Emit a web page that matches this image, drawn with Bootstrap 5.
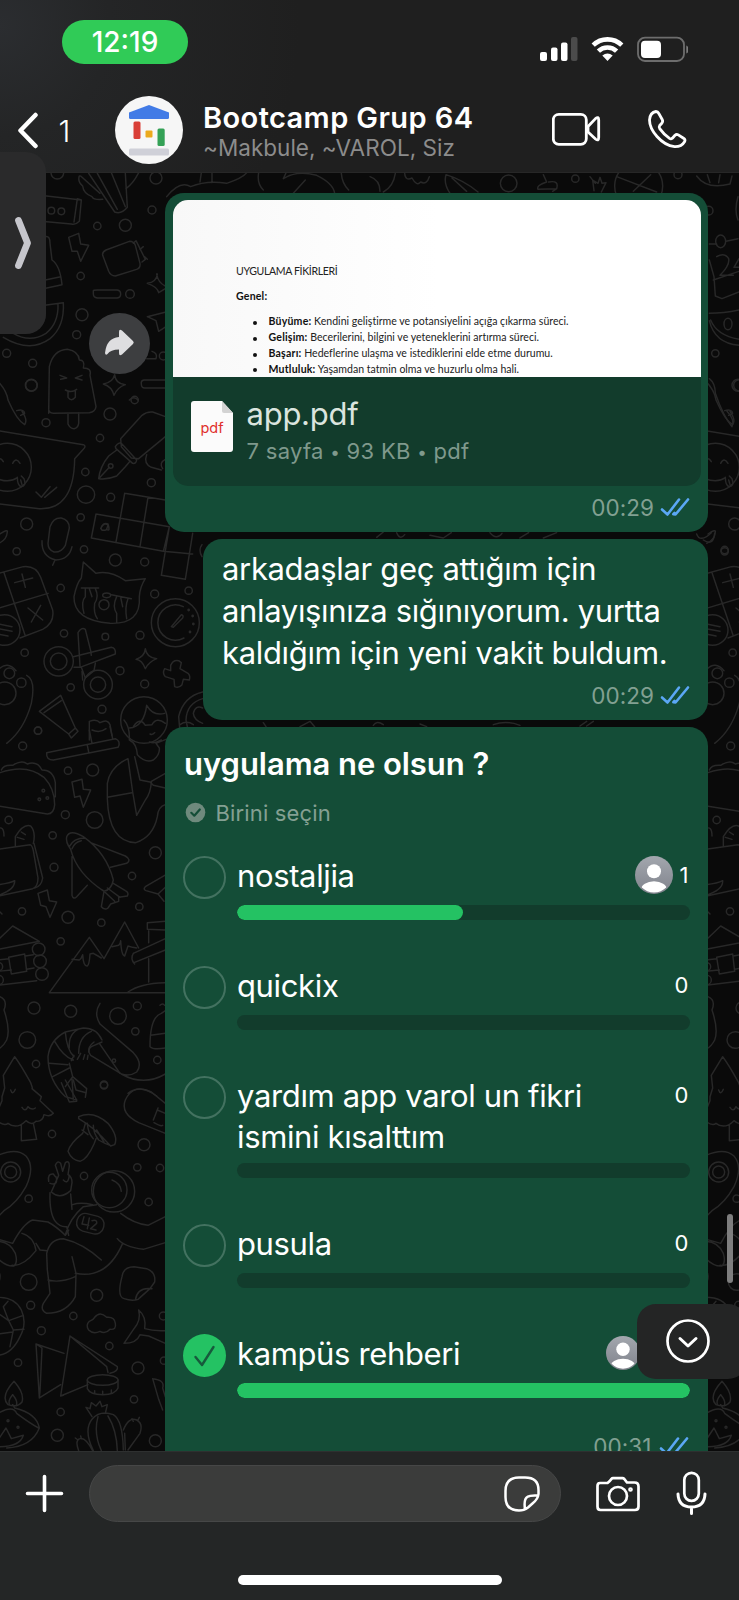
<!DOCTYPE html>
<html lang="tr" data-bs-theme="dark">
<head>
<meta charset="utf-8">
<meta name="viewport" content="width=device-width, initial-scale=1">
<title>Bootcamp Grup 64</title>
<link href="https://cdn.jsdelivr.net/npm/bootstrap@5.3.0/dist/css/bootstrap.min.css" rel="stylesheet">
<style>
  body{width:739px;height:1600px;margin:0;overflow:hidden;background:#0a0a0a;color:#fff;font-family:Inter,"Liberation Sans",sans-serif}
  svg{display:block;flex:none}
  .ln{fill:none;stroke:currentColor;stroke-linecap:round;stroke-linejoin:round}
  .phone{height:1600px}
  /* header */
  .top-bar{height:173px;background:radial-gradient(circle at 0 15%,#2b2d30 0,#242526 110px,#1f1f1f 300px);border-bottom:1px solid #272727}
  .status{height:86px;padding:20px 51px 0 62px}
  .clock{width:126px;height:44px;border-radius:22px;background:#30cb57;font-size:28px;font-weight:500;line-height:44px;letter-spacing:0}
  .chat-head{height:89px;padding-left:18px}
  .unread{font-size:30px;font-weight:300;line-height:36px;width:40px;margin-left:19.5px}
  .group-pic{width:68px;height:68px;margin-left:16.5px;margin-top:-1px}
  .who{margin-left:20px;width:349px}
  .who-name{font-size:29px;font-weight:600;line-height:34px;letter-spacing:.4px}
  .who-list{font-size:22.5px;line-height:26px;color:#8c8c8c;letter-spacing:.02px}
  /* conversation */
  .chat{height:1278px;overflow:hidden;padding:20px 31px 0 0;background:#0a0a0a}
  .wall{left:0;top:0;color:#282828}
  .wall .ln{stroke-width:4.4}
  .bubble{background:#144d37;border-radius:19px;position:relative;flex:none}
  .b-doc{width:543px;height:339px;padding:7px 7px 0 7.5px}
  .b-text{width:505px;height:181px;margin-top:7px;padding:9px 18px 0 19px}
  .b-poll{width:543px;height:760px;margin-top:7px;padding:17px 18.5px 0 18px}
  .doc{height:286px;border-radius:15px;background:#123c2c}
  .sheet{height:177px;background:linear-gradient(90deg,#f8f8f8,#fff 50%);color:#222;font:10.55px/15.8px Lato,sans-serif;padding:63.500px 0 0 63.5px;overflow:hidden;white-space:nowrap}
  .sheet p{margin:0 0 9.7px}
  .sheet ul{margin:1.3px 0 0;padding-left:32.5px;letter-spacing:.01px;list-style:none}
  .sheet li{height:15.8px;position:relative}
  .sheet li::before{content:"";position:absolute;left:-16px;top:6.5px;width:4px;height:4px;border-radius:50%;background:#111}
  .sheet b{color:#111;letter-spacing:.2px}
  .doc-name{font-size:31px;line-height:38px;letter-spacing:-.25px;color:#dbe5df}
  .doc-meta{font-size:22px;line-height:30px;letter-spacing:.3px;color:#7f998c;margin-top:3px}
  .doc-meta i{font-style:normal;font-size:17px;vertical-align:1.5px;line-height:1}
  .stamp{font-size:22.5px;line-height:24px;letter-spacing:.05px;color:#82a092}
  .msg{font-size:31px;line-height:42px;letter-spacing:-.34px;white-space:nowrap}
  .q{font-size:31px;font-weight:600;line-height:40px;letter-spacing:-.05px;padding-left:1px}
  .hint{font-size:22px;line-height:24px;margin-top:16.5px;letter-spacing:.15px;color:#84a093}
  .opt{display:grid;grid-template-columns:43px 1fr;column-gap:11px;height:110px}
  .opt.tall{height:148.5px}
  .opt-name{font-size:31px;line-height:41.7px;letter-spacing:-.36px;white-space:nowrap}
  .tall .opt-name{margin-bottom:-3.5px}
  .count{font-size:22px;line-height:40px;gap:7px;padding-right:1px}
  .track{height:15px;border-radius:8px;background:#123c2c;margin-top:8.6px;overflow:hidden}
  .fill{height:15px;border-radius:8px;background:#24c263}
  .ring{width:43px;height:43px;border-radius:50%;border:2.6px solid #437260;margin-top:1px}
  .ring.on{background:#24c263;border:0}
  /* floating controls */
  .side-tab{left:-20px;top:152px;width:65.5px;height:182px;border-radius:20px;background:#2a2a2b;padding-left:34px;z-index:3}
  .share{left:89px;top:313px;z-index:2}
  .thumb{left:727px;top:1213.5px;width:6.3px;height:69px;border-radius:4px;background:#7e7e7e}
  .to-end{left:637px;top:1303.5px;width:110px;height:75.5px;border-radius:19px;background:#242525;padding-left:29px}
  /* composer */
  .composer{height:149px;background:#242626;border-top:1px solid #2e3030;padding:13px 0 0 25px}
  .field{width:472px;height:57px;border-radius:29px;background:#3b3c3b;border:1px solid #464747;margin-left:25px;padding-right:20px}
  .home-bar{width:264px;height:10px;border-radius:5px;background:#fff;margin:52.5px 0 0 212.5px}
</style>
</head>
<body>
<div class="phone position-relative d-flex flex-column">

<header class="top-bar">
  <div class="status d-flex justify-content-between">
    <div class="clock text-center">12:19</div>
    <svg width="150" height="30" viewBox="538 34 150 30" style="margin-top:14px">
      <rect x="540" y="52" width="7" height="9" rx="2" fill="#fff"/><rect x="551" y="47.5" width="6.5" height="13.5" rx="2" fill="#fff"/><rect x="561" y="42.5" width="6.5" height="18.500" rx="2" fill="#fff"/><rect x="571" y="37" width="6.500" height="24" rx="2" fill="#4b4b4b"/>
      <g fill="none" stroke="#fff" stroke-width="4.600"><path d="M593.200 45.200A20.500 20.500 0 0 1 621.800 45.200"/><path d="M598.400 51.200A13 13 0 0 1 616.600 51.200"/></g>
      <path d="M602.300 55.600Q607.500 51.500 612.700 55.600L607.500 61Z" fill="#fff"/>
      <rect x="638" y="37.700" width="46" height="23.300" rx="7" fill="none" stroke="#6d6d6d" stroke-width="1.800"/>
      <rect x="641" y="40.700" width="20" height="17.200" rx="4" fill="#fff"/><path d="M686.300 45.500q2.600 1.200 2.600 4t-2.600 4z" fill="#7c7c7c"/>
    </svg>
  </div>
  <div class="chat-head d-flex align-items-center">
    <svg width="21" height="37" viewBox="0 0 21 37" class="ln text-white" stroke-width="4.500"><path d="M17.500 3L2.500 18.500L17.500 34"/></svg>
    <div class="unread">1</div>
    <svg class="group-pic" viewBox="115 96 68 68">
      <circle cx="149" cy="130" r="34" fill="#f6f6f6"/>
      <path d="M129 112.500L149 105L169 112.500V117.500Q169 119 167.500 119H130.500Q129 119 129 117.500Z" fill="#427be6"/>
      <rect x="133.500" y="121.500" width="7" height="17.500" rx="1.500" fill="#d93f37"/><rect x="145.500" y="130.500" width="7" height="7" rx="1" fill="#eba91d"/><rect x="157.500" y="128.500" width="7.200" height="17.500" rx="1.500" fill="#34a156"/><rect x="129" y="148.500" width="40" height="7" rx="1.500" fill="#cfd0d8"/>
    </svg>
    <div class="who"><div class="who-name">Bootcamp Grup 64</div><div class="who-list">~Makbule, ~VAROL, Siz</div></div>
    <svg width="136" height="44" viewBox="552 108 136 44" class="ln text-white" stroke-width="2.800" style="margin-top:-2px">
      <rect x="553.300" y="114.300" width="33" height="30" rx="5.500"/><path d="M588 126.500L595.500 118.600Q598.700 116 598.700 120V137.500Q598.700 141.500 595.500 139L588 132Z"/>
      <path d="M649.500 120Q650 112.500 656 111.500Q657.800 111.500 658.800 113.500L662.200 119.500Q663.300 121.500 661.800 123.200L659.700 125.500Q658.700 127 659.700 128.600Q664 134.600 669.500 138.400Q671 139.300 672.400 138.200L675 135.300Q676.500 133.900 678.300 134.900L683.500 138.200Q685.600 139.600 684.700 141.500Q681.500 147 674.500 146.700Q665 145.500 657 136.500Q649.500 128 649.500 120Z"/>
    </svg>
  </div>
</header>

<main class="chat position-relative d-flex flex-column align-items-end">
  <svg class="wall position-absolute" width="739" height="1278" viewBox="0 173 739 1278">
    <defs><g id="tile">
      <g class="ln" transform="translate(0 380) scale(.33333)">
        <circle cx="22" cy="262" r="72"/><path d="M-8 245q8-18 18 0M38 250q10-20 22 0M-10 295q36 16 62-2M52 292q0 26 12 28 16-2 8-24l-8-8M62 300l4 14"/>
        <path d="M-20 150L250 194Q260 198 250 208L224 236Q222 390 118 386L-20 370"/><path d="M108 336l16 16 26-32M134 352l36-30M-10 0Q20 30 24 60Q50 120 74 134Q84 120 66 94M50 92q22-6 24 8l-12 6"/>
        <path d="M0 462q24-16 22-6Q20 480 -4 490"/>
        <circle cx="80" cy="432" r="18"/><circle cx="50" cy="514" r="11"/><circle cx="94" cy="16" r="17"/>
        <path d="M-10 582L70 560Q108 556 122 592L158 690Q164 730 128 748L60 774M12 578L76 768M-8 686L144 640M44 608L98 594M66 582l10 40M84 684l44 36M122 676l-28 50"/><circle cx="14" cy="750" r="46"/><path d="M-4 732l40 8M-6 746l42 8M-6 762l30 6"/>
        <circle cx="74" cy="818" r="11"/><circle cx="14" cy="940" r="34"/><circle cx="28" cy="880" r="16"/><circle cx="64" cy="908" r="14"/><path d="M-4 868Q22 842 48 872M80 886Q108 900 94 970Q72 1050 20 1090"/>
      </g>
      <g class="ln" transform="translate(0 720) scale(.33333)">
        <path d="M0 158Q80 130 132 172Q164 206 164 254Q162 282 142 282L-4 258M4 150Q10 134 38 136Q66 118 82 132Q112 122 126 150Q160 150 166 188V230"/><circle cx="130" cy="212" r="4"/><circle cx="118" cy="238" r="4"/><circle cx="142" cy="234" r="4"/>
        <circle cx="26" cy="300" r="11"/><circle cx="68" cy="78" r="12"/><path d="M-6 388L90 374Q96 374 100 392L114 474Q114 500 98 506L-4 528M102 370L128 474Q124 500 104 504M46 380V350Q70 310 92 318Q108 336 100 370M-8 326q20-10 20 22M-6 494Q30 490 44 482Q46 510 -6 526M52 352l20 6M64 336l12 8"/>
        <path d="M-6 660L38 618L118 664L-6 688M-6 720L26 716M76 708L100 704M26 712L74 702L80 754L34 762ZM-6 754L34 750M80 748L102 744M-6 796L110 782"/><circle cx="116" cy="688" r="19"/><circle cx="120" cy="724" r="19"/><circle cx="126" cy="762" r="19"/><circle cx="-4" cy="740" r="12"/><circle cx="-4" cy="780" r="14"/>
        <circle cx="66" cy="574" r="11"/><path d="M0 830Q24 840 12 870Q32 930 20 960Q10 980 -6 988M-6 570l12 12"/><circle cx="82" cy="960" r="25"/><circle cx="102" cy="864" r="18"/><circle cx="108" cy="1032" r="11"/>
      </g>
      <g class="ln" transform="translate(0 1080) scale(.33333)">
        <path d="M10 -14L44 -70Q60 -50 92 8Q100 30 96 26L124 50L120 62L160 100Q150 112 132 104Q128 126 108 124Q96 138 78 122Q50 150 24 130Q14 138 -4 126M10 -14L14 24L6 50L6 62L-4 86M64 136V182L110 178L100 130M32 30q6 18 14-2M66 82q10 16 18-2q10 12 22 4"/>
        <path d="M-6 226Q50 202 78 228Q106 260 78 320Q50 370 12 392L-6 410"/><circle cx="32" cy="276" r="30"/><circle cx="32" cy="276" r="18"/><circle cx="86" cy="356" r="11"/>
        <path d="M-6 484Q30 486 46 520Q54 548 42 558Q18 560 -6 536M-4 478L38 490Q70 430 98 420L144 426Q170 440 196 466M66 460Q102 470 108 512Q70 560 36 556M-6 574q14 10-4 50"/>
        <circle cx="86" cy="606" r="25"/><circle cx="92" cy="676" r="12"/><path d="M-6 652Q46 652 64 690Q82 730 60 770Q36 822 -6 826M-6 700L26 722L70 706M26 722L40 750L30 800M40 750L72 748M26 722L10 680L24 664M-6 762L38 756"/>
        <circle cx="54" cy="848" r="11"/><path d="M42 904Q74 940 66 966Q52 984 24 974Q0 950 42 904ZM38 944Q52 960 50 972M38 944Q24 960 28 972M38 974L44 984Q110 1000 118 1044Q96 1100 20 1104M-6 1000Q40 974 50 1000Q90 1030 116 1044M-6 1080L18 1044L34 1076L70 1066Q60 1100 0 1100"/><circle cx="24" cy="1022" r="3"/><circle cx="54" cy="1042" r="3"/>
      </g>
    </g></defs>
    <use href="#tile"/><use href="#tile" x="708"/>
    <!-- upper left -->
    <g class="ln" transform="translate(0 140) scale(.33333)">
      <circle cx="172" cy="98" r="19"/><circle cx="468" cy="114" r="18"/><circle cx="456" cy="210" r="12"/><circle cx="376" cy="256" r="18"/><circle cx="292" cy="258" r="11"/><circle cx="242" cy="408" r="11"/><circle cx="390" cy="462" r="13"/><circle cx="246" cy="524" r="18"/><circle cx="230" cy="584" r="12"/><circle cx="98" cy="670" r="12"/><circle cx="20" cy="640" r="12"/>
      <path d="M120 166L244 180L238 244Q226 256 214 252L124 244M244 180L232 176L222 246"/><circle cx="154" cy="212" r="10"/><circle cx="184" cy="214" r="10"/>
      <path d="M266 100L344 216Q364 224 382 202L376 100M292 100L352 208M334 98L376 200M416 98Q400 130 378 146M238 108Q232 124 248 138Q250 160 276 170Q280 180 308 178M242 108L300 160"/>
      <path d="M206 292L236 280L242 312L266 316L242 364L232 334L216 334Z"/>
      <path d="M308 346Q306 336 318 330L388 304Q402 304 406 316L420 370Q422 384 410 388L346 408Q332 408 326 394ZM400 310L408 302L436 358L426 366M420 328L430 320M434 350L442 358"/>
      <path d="M470 402Q474 428 496 438M442 430Q470 426 472 402M442 430Q472 440 476 458L496 446M280 452Q280 450 292 450H352Q362 452 362 462T352 474H292Q280 472 280 462ZM442 530L498 516M442 530L468 542L476 574L498 560"/>
      <path d="M136 290Q150 286 150 310L156 360Q180 376 186 434L130 446M136 420L182 410"/>
      <path d="M190 488Q194 560 150 596Q90 640 10 592M174 492Q176 550 138 580Q90 610 40 580M134 496L190 488M134 500Q140 540 120 560"/>
      <path d="M146 820L148 680Q160 630 202 628Q236 634 238 660Q256 660 250 684Q276 684 270 706L288 800Q286 816 268 818L160 820Q146 818 146 806M204 820V852Q210 866 222 866Q234 864 236 850V818M180 706L200 714L182 718M246 706L226 714L246 720M196 750Q214 760 230 748M204 756V772Q214 786 226 772V754"/>
      <path d="M344 704Q346 732 376 734Q352 742 342 766Q336 740 310 732Q338 728 344 704ZM496 720H432Q422 722 424 732Q424 744 434 744H496M456 634Q474 640 468 656H440M388 780q14-14 26 0"/><circle cx="490" cy="648" r="12"/><circle cx="94" cy="736" r="18"/>
    </g>
    <g class="ln" transform="translate(0 380) scale(.33333)">
      <circle cx="404" cy="60" r="11"/><circle cx="330" cy="102" r="18"/><circle cx="138" cy="128" r="12"/><circle cx="300" cy="174" r="11"/><circle cx="256" cy="276" r="11"/><circle cx="454" cy="308" r="12"/><circle cx="258" cy="344" r="26"/><circle cx="332" cy="352" r="12"/><circle cx="242" cy="412" r="11"/><circle cx="252" cy="508" r="11"/><circle cx="346" cy="540" r="18"/><circle cx="434" cy="546" r="12"/><circle cx="182" cy="624" r="11"/><circle cx="464" cy="642" r="12"/><circle cx="566" cy="632" r="11"/><circle cx="192" cy="760" r="11"/><circle cx="316" cy="770" r="10"/><circle cx="420" cy="766" r="12"/><circle cx="360" cy="872" r="12"/><circle cx="434" cy="912" r="12"/><circle cx="212" cy="922" r="11"/><circle cx="306" cy="988" r="12"/><circle cx="114" cy="1052" r="11"/>
      <path d="M496 110L458 96Q440 94 426 106L362 176L364 200L394 234L416 236L496 170M346 200Q356 184 366 192L410 240Q408 252 398 250L348 206ZM350 210L326 228Q300 260 296 296Q320 300 350 288L376 260L390 244M298 294L328 262M440 224Q430 250 454 262L484 270M496 238q-20 10-8 28"/><circle cx="332" cy="258" r="7"/>
      <path d="M288 402L508 440L490 514L578 522M274 474L490 514M288 402L274 474M374 340L496 360M374 340L348 486M444 352L420 500M508 440L484 586L556 598L578 460"/><path d="M318 450q-18 4-14-8q10-16 20-6l-4 12q12 8 4-16-16-6-22 14"/>
      <path d="M150 440Q160 412 184 414Q208 420 208 444L196 496Q184 518 162 516Q144 510 144 490ZM126 482Q124 530 168 540Q208 538 216 500M164 542L158 556"/>
      <path d="M250 546L288 580Q330 570 376 602L436 596Q420 620 418 650Q424 734 330 730Q220 720 222 650Q230 610 244 594ZM244 624H296M334 644L394 656M256 626V650Q242 664 252 700M286 626Q298 650 284 670Q280 700 292 716M350 650Q336 680 350 700V726M384 656Q374 680 380 716M268 626L276 650M362 652L368 680"/><circle cx="312" cy="674" r="15"/><ellipse cx="320" cy="646" rx="12" ry="7"/>
      <circle cx="526" cy="728" r="72"/><path d="M550 680A53 53 0 1 0 552 774M514 740L544 704Q552 706 548 714L520 742Z"/><circle cx="566" cy="690" r="2"/><circle cx="578" cy="708" r="2"/><circle cx="580" cy="732" r="2"/><circle cx="570" cy="756" r="2"/>
      <circle cx="176" cy="844" r="44"/><circle cx="176" cy="844" r="25"/><circle cx="294" cy="914" r="43"/><circle cx="294" cy="914" r="23"/><path d="M220 830L334 802Q348 804 346 822L240 862L222 862M240 858L234 758Q244 740 256 748L272 812L274 826M244 862L256 894L282 872L286 850M246 874L248 900"/>
      <path d="M436 806Q440 834 470 836Q446 846 436 866Q426 840 408 838Q434 830 436 806ZM512 856Q520 838 536 842L544 848L540 866L564 880Q572 888 568 900L550 898L546 914Q536 926 524 920L522 898L496 890Q486 880 494 866L512 872Z"/>
      <path d="M118 994L182 946L226 1044L206 1062ZM132 998L184 962M206 1062L214 1074L234 1054L226 1044"/>
      <circle cx="432" cy="1020" r="70"/><path d="M388 1044Q432 1040 440 976Q460 1010 494 1000M400 1040Q420 1010 436 1036M456 1034Q470 1010 496 1030M436 1036L456 1034"/><path d="M608 936Q550 950 536 1010L540 1056M608 956Q560 970 558 1020L564 1050M608 984Q586 974 580 1000Q582 1020 608 1030M606 494Q594 510 606 530"/>
      <path d="M268 1080V1024Q290 1016 300 1028Q324 1016 330 1034L336 1066M276 1050Q300 1060 318 1046"/>
    </g>
    <g class="ln" transform="translate(0 720) scale(.33333)">
      <circle cx="114" cy="32" r="11"/><circle cx="204" cy="152" r="11"/><circle cx="278" cy="150" r="18"/><circle cx="196" cy="284" r="12"/><circle cx="284" cy="300" r="25"/><circle cx="158" cy="346" r="11"/><circle cx="162" cy="442" r="12"/><circle cx="466" cy="398" r="18"/><circle cx="396" cy="468" r="11"/><circle cx="418" cy="560" r="11"/><circle cx="204" cy="592" r="18"/><circle cx="304" cy="608" r="11"/><circle cx="182" cy="664" r="11"/><circle cx="212" cy="874" r="18"/><circle cx="354" cy="888" r="25"/><circle cx="412" cy="858" r="12"/><circle cx="406" cy="934" r="11"/><circle cx="472" cy="1020" r="11"/><circle cx="312" cy="1096" r="11"/><circle cx="342" cy="1022" r="5"/>
      <path d="M140 98L346 56Q364 64 354 82L160 120Q138 120 140 98ZM262 76L266 96M276 70L268 30M338 56L330 20"/><path d="M372 0Q390 20 388 60Q410 70 412 104Q436 130 460 120Q480 104 478 84L468 70L498 58M450 42q8 4 14-4M448 66Q464 72 484 60"/>
      <path d="M384 116Q330 140 322 190V236Q326 366 408 368Q460 350 472 290Q474 260 496 254M384 116L398 216L410 286L436 240Q452 220 454 186M322 232L396 218M404 110L420 180L450 186L460 196L496 204M454 184L496 160"/>
      <path d="M216 186L246 178L250 208L272 210L250 262L240 228L224 232ZM114 520L142 510L148 542L170 546L150 592L138 560L122 556Z"/>
      <path d="M200 350Q210 326 250 350Q320 400 340 480Q334 510 312 514Q230 460 212 388Q196 366 200 350ZM208 380Q220 354 256 354M216 386Q224 366 244 362M272 368L376 408Q396 420 380 430L332 442M216 410V526Q220 540 230 530L262 496M312 514L304 560Q314 572 324 564L332 552L356 544V532L382 528Q388 518 376 512L340 490M308 510L344 544M322 504L360 532M498 464L436 500Q428 508 438 512L474 522L496 502M474 522L492 544"/>
      <path d="M148 818L268 652L312 716L374 606L416 684M148 818H496M216 718L238 720Q244 716 248 704Q250 740 262 738Q268 734 270 702L280 700L294 708L304 714M336 680L356 676Q362 670 362 662Q364 706 374 708L384 678L398 682L410 684M400 700L496 656M402 728L496 690M400 700Q390 716 404 732M446 632V668M446 716V786M442 628V608L496 604M442 628L496 630M384 816Q420 790 494 788"/>
      <path d="M300 850Q280 880 300 912L400 998Q430 1030 410 1056Q390 1070 364 1062L272 1006Q260 990 274 980L306 966M364 1062Q430 1100 496 1062"/>
      <path d="M306 960Q290 924 250 924L196 936Q150 960 144 1010Q144 1080 196 1130L230 1140M164 964Q190 1010 220 1020M196 936Q200 990 222 1010M240 926Q204 940 208 984M274 934Q236 950 236 1000M148 1030L204 1034M158 1070L208 1044M208 1030L218 1070M222 1006L214 1022M242 1000L232 1018M254 1004L250 1018M264 1006L262 1018M282 966Q264 980 266 996M298 970L360 1060M196 1100L218 1070L260 1106L256 1132M216 1076L220 1140"/>
      <path d="M450 980Q450 890 484 880L496 872M452 946L496 940M450 980Q460 990 496 984M480 856q8-8 14 0M384 1120Q420 1090 470 1128"/>
    </g>
    <g class="ln" transform="translate(0 1080) scale(.33333)">
      <circle cx="312" cy="14" r="11"/><circle cx="156" cy="162" r="11"/><circle cx="432" cy="194" r="18"/><circle cx="412" cy="262" r="11"/><circle cx="480" cy="264" r="11"/><circle cx="252" cy="288" r="11"/><circle cx="446" cy="366" r="11"/><circle cx="290" cy="646" r="18"/><circle cx="220" cy="708" r="11"/><circle cx="124" cy="752" r="12"/><circle cx="328" cy="798" r="11"/><circle cx="414" cy="864" r="18"/><circle cx="490" cy="708" r="12"/><circle cx="492" cy="842" r="11"/><circle cx="402" cy="958" r="11"/><circle cx="182" cy="996" r="11"/><circle cx="172" cy="1066" r="18"/><circle cx="466" cy="1082" r="18"/>
      <path d="M184 8L208 66L230 64M196 0L230 60M220 0L228 30L258 38M496 160L416 128Q360 100 376 60Q400 10 454 36L496 70M472 90l24 10M460 120L474 84M462 128q20 12 26 8"/>
      <path d="M236 110Q280 90 324 130Q356 170 344 194L332 198Q280 140 236 116ZM256 130L248 160Q210 190 204 214Q214 240 240 244Q262 238 282 192L288 176M262 130Q264 160 280 176M280 136Q280 160 296 180Q312 190 330 196M246 150L264 164M290 150L312 186"/>
      <circle cx="342" cy="334" r="62"/><circle cx="328" cy="330" r="53"/><path d="M336 300Q362 310 364 334M146 304Q142 280 160 282L166 290M176 286L166 256Q172 240 182 250L188 274L196 248Q208 240 208 258L204 284Q216 290 216 308L212 332Q180 360 154 336ZM150 310Q176 318 168 290M190 300Q204 316 208 286M150 338Q148 400 166 424Q180 442 200 440L206 466M212 342L216 388M196 464Q210 414 250 380L290 374M218 374Q240 366 278 374"/>
      <rect x="230" y="404" width="82" height="54" rx="24" transform="rotate(14 270 431)"/><path d="M252 410L246 432L266 436M268 414L262 446M276 422Q292 418 290 430L272 446L288 450M362 400Q400 430 444 436L496 410M352 476Q370 500 430 508L496 488M304 540Q250 490 190 476Q150 476 140 520L142 570Q146 600 150 640L130 670Q120 690 140 700Q200 700 226 650L228 580L216 530M144 600Q180 610 226 590M226 580Q320 600 368 490M196 466L206 450M108 490L120 510L142 512"/>
      <path d="M366 590Q370 560 402 560L440 566Q468 576 464 606L450 626L414 658Q396 664 372 656Q350 650 366 590ZM406 660Q412 620 456 626"/>
      <path d="M266 750Q256 736 268 724Q280 720 284 712Q300 692 320 712Q344 710 346 730Q350 750 330 748Q316 764 300 754Q280 764 266 750ZM372 790L402 746Q424 720 416 690Q440 710 434 746Q460 754 496 752M372 790Q410 790 420 764L446 768L496 790"/>
      <path d="M108 792L192 820M108 792L118 954L182 914M108 792L126 804L120 934L118 954M210 768L182 948L264 914M210 768L352 860Q356 874 330 880M210 768L320 860L324 878M182 948L190 946"/><ellipse cx="308" cy="900" rx="46" ry="16"/><path d="M262 900V926Q270 944 308 944T354 924V900M284 932V940M308 934V944M334 930V940M458 896Q496 900 488 924L496 950M458 896L476 958L488 990"/>
      <path d="M280 1112Q250 1050 276 1018Q300 990 340 1004Q368 1020 370 1110M294 1010Q280 1060 304 1112M324 1008Q350 1050 352 1112M276 1010L258 982L270 986L274 968L288 978L300 964L306 980L322 974L316 1000M370 1050Q386 1010 410 1020Q430 1030 420 1060L384 1110M374 1060L376 1110M400 1024l-4-8M414 1020l4-8M236 1112Q224 1080 240 1076Q256 1070 278 1112M234 1080l-8-6M244 1076l-2-8"/>
    </g>
    <!-- upper strip and right edge -->
    <g class="ln" transform="translate(0 140) scale(.33333)">
      <path d="M500 170Q540 120 572 140Q620 120 680 130Q740 110 744 90M600 126L604 98M636 128V100M776 98Q770 130 790 150M850 116Q890 90 950 106Q1000 130 1004 160M850 116L862 90M880 160L916 120M1024 100Q1026 130 1046 150"/>
    </g>
    <g class="ln" transform="translate(370 170) scale(.33333)">
      <circle cx="416" cy="40" r="25"/><circle cx="616" cy="26" r="11"/><circle cx="924" cy="14" r="12"/><circle cx="806" cy="48" r="72"/><path d="M0 20Q30 30 30 64M40 66Q70 50 76 10M104 10Q106 34 126 24Q140 50 152 36Q170 46 178 20M240 70Q220 40 228 14Q280 30 324 66M246 24L290 64M520 14L530 36Q498 46 504 58L560 56Q568 30 536 36M560 56L548 64M660 20L676 40M672 62L668 30L684 40L690 22L696 40L708 38L694 66M740 20L860 66M790 64L842 14M980 18Q1010 60 1080 42L1086 18M1012 14L1020 38M1050 14L1046 38"/>
      <path d="M1018 222H1040M1068 214L1104 206M1104 80Q1092 120 1104 150M1040 260Q1064 246 1076 266Q1080 286 1050 316H1090M1018 270L1032 320L1036 378L1056 386L1107 366M1030 330L1107 304M1107 266L1092 292H1107M1018 430Q1060 430 1107 420M1018 452Q1034 520 1107 526M1022 450Q1040 496 1107 508"/><ellipse cx="1052" cy="214" rx="15" ry="19"/><ellipse cx="1074" cy="462" rx="12" ry="17"/><circle cx="1036" cy="550" r="11"/><circle cx="1016" cy="122" r="13"/><circle cx="1104" cy="646" r="18"/>
      <path d="M1018 626Q1036 640 1036 670Q1060 740 1086 770Q1096 750 1070 722"/>
      <path d="M20 1102L40 1086M80 1088Q90 1112 104 1094M180 1096L220 1104L244 1088M360 1088Q380 1112 396 1090M450 1104L476 1088M520 1104L560 1088M1000 1110Q1030 1130 1034 1090M1024 1088Q990 1120 980 1092"/><circle cx="1064" cy="1140" r="11"/>
    </g>
    <g class="ln" transform="translate(160 708) scale(.33333)">
      <path d="M60 50Q80 36 100 50M310 44l8 12M420 56L450 40L464 56M640 52Q650 36 670 50M780 48L800 56M1000 50Q1040 36 1080 52M1260 54L1280 40M1280 54L1300 40"/>
    </g>
  </svg>

  <section class="bubble b-doc">
    <div class="doc overflow-hidden">
      <div class="sheet">
        <p style="letter-spacing:-.36px">UYGULAMA FİKİRLERİ</p><p><b>Genel:</b></p>
        <ul><li><b>Büyüme:</b> Kendini geliştirme ve potansiyelini açığa çıkarma süreci.</li><li><b>Gelişim:</b> Becerilerini, bilgini ve yeteneklerini artırma süreci.</li><li><b>Başarı:</b> Hedeflerine ulaşma ve istediklerini elde etme durumu.</li><li><b>Mutluluk:</b> Yaşamdan tatmin olma ve huzurlu olma hali.</li></ul>
      </div>
      <div class="d-flex" style="padding:18px 0 0 18.500px">
        <svg width="43" height="53" viewBox="0 0 43 53" style="margin-top:6px"><path d="M3 0H31L42 12V48Q42 51 39 51H3Q0 51 0 48V3Q0 0 3 0Z" fill="#fbfbfb"/><path d="M31 0L42 12H33Q31 12 31 10Z" fill="#d3d3d3"/><text x="21" y="32" text-anchor="middle" font-size="14.500" fill="#e02f2c">pdf</text></svg>
        <div style="margin-left:12.500px"><div class="doc-name">app.pdf</div><div class="doc-meta">7 sayfa <i>•</i> 93 KB <i>•</i> pdf</div></div>
      </div>
    </div>
    <div class="d-flex justify-content-end" style="margin:10.200px 11px 0 0"><span class="stamp">00:29</span><svg class="ln" width="30" height="22" viewBox="0 0 30 22" color="#5ba7f5" stroke-width="2.600" style="margin:0 0 0 6px"><path d="M2 13.500L7.500 18.500L19 3.500M13.500 18.300L15.500 18.500L28 3.500M13.300 18.200L14.500 17"/></svg></div>
  </section>

  <section class="bubble b-text">
    <div class="msg">arkadaşlar geç attığım için<br>anlayışınıza sığınıyorum. yurtta<br>kaldığım için yeni vakit buldum.</div>
    <div class="d-flex justify-content-end" style="margin-top:9.500px"><span class="stamp">00:29</span><svg class="ln" width="30" height="22" viewBox="0 0 30 22" color="#5ba7f5" stroke-width="2.600" style="margin:0 0 0 6px"><path d="M2 13.500L7.500 18.500L19 3.500M13.500 18.300L15.500 18.500L28 3.500M13.300 18.200L14.500 17"/></svg></div>
  </section>

  <section class="bubble b-poll">
    <div class="q">uygulama ne olsun ?</div>
    <div class="hint d-flex align-items-center"><svg width="21" height="21" viewBox="0 0 21 21" style="margin:0 9.500px 0 2px"><circle cx="10.500" cy="10.500" r="9.800" fill="#6f8a7d"/><path class="ln" stroke-width="2.200" color="#144d37" d="M6.300 10.800L9.300 13.700L14.800 7.500"/></svg>Birini seçin</div>
    <div style="margin-top:30px">
      <div class="opt"><div class="ring"></div><div>
        <div class="d-flex justify-content-between"><div class="opt-name">nostaljia</div><div class="count d-flex"><svg width="38" height="38" viewBox="0 0 38 38" style="margin-top:1px"><defs><linearGradient id="av" x2="0" y2="1"><stop stop-color="#a3a7ae"/><stop offset="1" stop-color="#80838c"/></linearGradient><clipPath id="cut"><circle cx="19" cy="19" r="17.500"/></clipPath></defs><circle cx="19" cy="19" r="19" fill="url(#av)"/><circle cx="19" cy="15.300" r="7" fill="#fff"/><ellipse cx="19" cy="34" rx="13" ry="8.700" fill="#fff" clip-path="url(#cut)"/></svg>1</div></div>
        <div class="track"><div class="fill" style="width:50%"></div></div></div></div>
      <div class="opt"><div class="ring"></div><div>
        <div class="d-flex justify-content-between"><div class="opt-name">quickix</div><div class="count">0</div></div>
        <div class="track"></div></div></div>
      <div class="opt tall"><div class="ring"></div><div>
        <div class="d-flex justify-content-between"><div class="opt-name">yardım app varol un fikri<br>ismini kısalttım</div><div class="count">0</div></div>
        <div class="track"></div></div></div>
      <div class="opt"><div class="ring"></div><div>
        <div class="d-flex justify-content-between"><div class="opt-name">pusula</div><div class="count">0</div></div>
        <div class="track"></div></div></div>
      <div class="opt"><div class="ring on"><svg class="ln" width="43" height="43" viewBox="0 0 43 43" color="#175a3c" stroke-width="2.400"><path d="M12.500 23L19 31L30.500 13"/></svg></div><div>
        <div class="d-flex justify-content-between"><div class="opt-name">kampüs rehberi</div><svg width="34" height="34" viewBox="0 0 38 38" style="margin:3px 49.500px 0 0"><circle cx="19" cy="19" r="19" fill="url(#av)"/><circle cx="19" cy="14.800" r="7.500" fill="#fff"/><ellipse cx="19" cy="34" rx="14" ry="8.700" fill="#fff" clip-path="url(#cut)"/></svg></div>
        <div class="track"><div class="fill" style="width:100%"></div></div></div></div>
    </div>
    <div class="d-flex justify-content-end" style="margin:-8px 1px 0 0"><span class="stamp">00:31</span><svg class="ln" width="30" height="22" viewBox="0 0 30 22" color="#5ba7f5" stroke-width="2.600" style="margin:0 0 0 7px"><path d="M2 13.500L7.500 18.500L19 3.500M13.500 18.300L15.500 18.500L28 3.500"/></svg></div>
  </section>
</main>

<footer class="composer position-relative">
  <div class="d-flex align-items-center">
    <svg class="ln" width="39" height="39" viewBox="0 0 39 39" stroke-width="3.600"><path d="M19.500 2.500V36.500M2.500 19.500H36.500"/></svg>
    <div class="field d-flex align-items-center justify-content-end">
      <svg class="ln" width="36" height="36" viewBox="503 1476 36 36" stroke-width="2.500"><path d="M518 1477.500H524Q537.500 1477.500 537.500 1490V1494Q537 1499 532 1503L527 1507.500Q523 1510.500 518 1510.500Q504.500 1510.500 504.500 1497V1491Q504.500 1477.500 518 1477.500ZM524 1509Q522.500 1499 526.500 1496.800Q529 1495 537 1495.500"/></svg>
    </div>
    <svg class="ln" width="114" height="46" viewBox="595 1470.500 114 46" stroke-width="2.700" style="margin-left:34px">
      <path d="M600 1482.500H607.500L609.800 1480.500L611.500 1478.300Q612 1477.700 613 1477.700H622.500Q623.500 1477.700 624.300 1478.500L627 1482H634.500Q638.500 1482 638.500 1486V1506Q638.500 1509.500 635 1509.500H600.500Q597.500 1509.500 597.500 1506V1485.500Q597.500 1482.500 600 1482.500Z"/><circle cx="618" cy="1495.500" r="9"/><circle cx="630.500" cy="1489" r="1" />
      <rect x="684.300" y="1472.300" width="14.500" height="28" rx="7.200"/><path d="M678 1493.500Q678.500 1506.500 691.500 1506.500T705 1493.500M691.500 1507V1513" stroke-width="3"/>
    </svg>
  </div>
  <div class="home-bar"></div>
</footer>

<div class="side-tab position-absolute d-flex align-items-center"><svg class="ln" width="20" height="54" viewBox="0 0 20 54" color="#c6c6cc" stroke-width="6.800"><path d="M4.500 4.500L13.500 27L4.500 49.500"/></svg></div>
<svg class="share position-absolute" width="61" height="61" viewBox="0 0 61 61"><circle cx="30.500" cy="30.500" r="30.500" fill="#3d3e40"/><path d="M30 19Q30 15.500 33 17.500L44 28Q45.500 29.500 44 31L33 41.500Q30 43.500 30 40V36.500Q21.500 36.500 18.500 41Q16.500 43 16 40Q17.500 25 30 24Z" fill="#dedee0"/></svg>
<div class="thumb position-absolute"></div>
<div class="to-end position-absolute d-flex align-items-center"><svg class="ln" width="44" height="44" viewBox="0 0 44 44"><circle cx="22" cy="22" r="20.500" stroke-width="2.700"/><path d="M14 19.500L22 27L30 19.500" stroke-width="3"/></svg></div>

</div>
<script src="https://cdn.jsdelivr.net/npm/bootstrap@5.3.0/dist/js/bootstrap.bundle.min.js"></script>
</body>
</html>
